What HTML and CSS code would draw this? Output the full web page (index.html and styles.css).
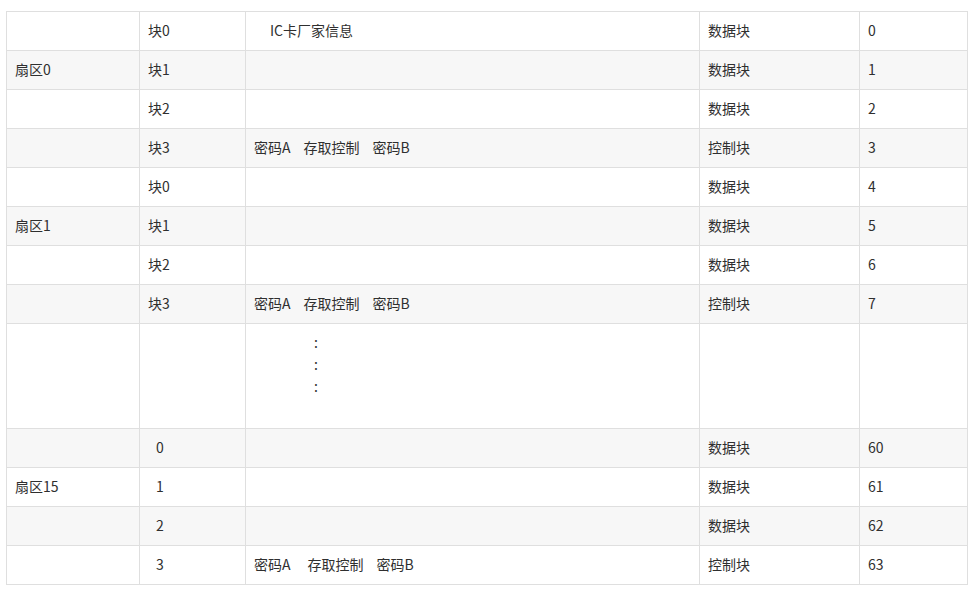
FILE: index.html
```html
<!DOCTYPE html>
<html lang="zh-CN">
<head>
<meta charset="utf-8">
<title>M1卡存储结构</title>
<link rel="stylesheet" href="styles.css">
</head>
<body>
<table class="mem">
  <colgroup>
    <col class="c1"><col class="c2"><col class="c3"><col class="c4"><col class="c5">
  </colgroup>
  <tbody>
    <tr><td></td><td>块0</td><td><span class="ind16">IC卡厂家信息</span></td><td>数据块</td><td>0</td></tr>
    <tr><td>扇区0</td><td>块1</td><td></td><td>数据块</td><td>1</td></tr>
    <tr><td></td><td>块2</td><td></td><td>数据块</td><td>2</td></tr>
    <tr><td></td><td>块3</td><td><span>密码A</span><span class="gap13">存取控制</span><span class="gap13">密码B</span></td><td>控制块</td><td>3</td></tr>
    <tr><td></td><td>块0</td><td></td><td>数据块</td><td>4</td></tr>
    <tr><td>扇区1</td><td>块1</td><td></td><td>数据块</td><td>5</td></tr>
    <tr><td></td><td>块2</td><td></td><td>数据块</td><td>6</td></tr>
    <tr><td></td><td>块3</td><td><span>密码A</span><span class="gap13">存取控制</span><span class="gap13">密码B</span></td><td>控制块</td><td>7</td></tr>
    <tr><td></td><td></td><td class="dots"><span>:</span><br><span>:</span><br><span>:</span><br>&nbsp;</td><td></td><td></td></tr>
    <tr><td></td><td><span class="ind8">0</span></td><td></td><td>数据块</td><td>60</td></tr>
    <tr><td>扇区15</td><td><span class="ind8">1</span></td><td></td><td>数据块</td><td>61</td></tr>
    <tr><td></td><td><span class="ind8">2</span></td><td></td><td>数据块</td><td>62</td></tr>
    <tr><td></td><td><span class="ind8">3</span></td><td><span>密码A</span><span class="gap17">存取控制</span><span class="gap13">密码B</span></td><td>控制块</td><td>63</td></tr>
  </tbody>
</table>
</body>
</html>
```
FILE: styles.css
```css
html, body {
  margin: 0;
  padding: 0;
  background: #ffffff;
}

body {
  padding: 11px 0 0 6px;
  font-family: "Noto Sans CJK SC", "Noto Sans", sans-serif;
  font-size: 14px;
  color: #2f2f2f;
}

.mem {
  border-collapse: collapse;
  table-layout: fixed;
  width: 962px;
}

.c1 { width: 133px; }
.c2 { width: 106px; }
.c3 { width: 454px; }
.c4 { width: 160px; }
.c5 { width: 108px; }

.mem td {
  border: 1px solid #dfdfdf;
  padding: 7px 8px 9px 8px;
  line-height: 22px;
  height: 22px;
  white-space: nowrap;
  vertical-align: middle;
}

.mem tr:nth-child(even) td {
  background: #f7f7f7;
}

.ind16 {
  margin-left: 16px;
}

.ind8 {
  margin-left: 8px;
}

.gap13 {
  margin-left: 13px;
}

.gap17 {
  margin-left: 17px;
}

.dots span {
  margin-left: 60px;
}
```
